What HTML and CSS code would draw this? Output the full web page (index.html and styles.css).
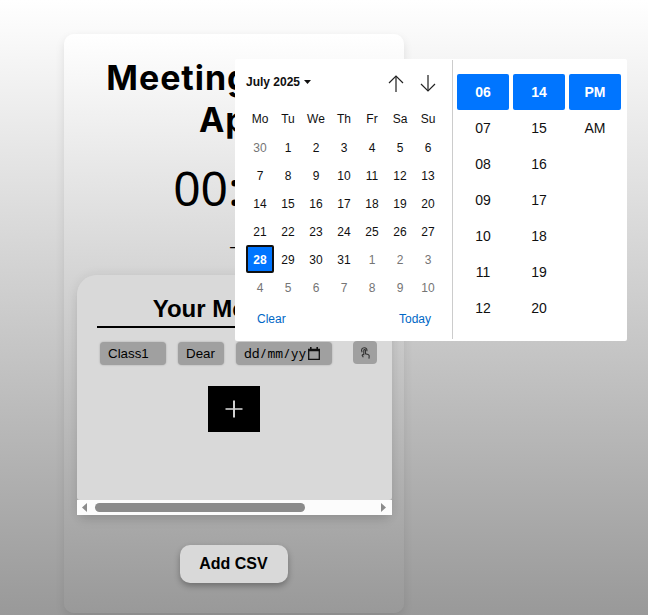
FILE: index.html
```html
<!DOCTYPE html>
<html lang="en">
<head>
<meta charset="utf-8">
<title>Meeting Alarm App</title>
<link rel="stylesheet" href="styles.css">
</head>
<body>
<main class="card">
  <h1 class="title">Meeting Alarm<br>App</h1>
  <div class="timer">00:00</div>
  <div class="status">–</div>
  <section class="panel">
    <div class="panel-body">
      <h2 class="heading">Your Meetings</h2>
      <div class="row">
        <div class="field name">Class1</div>
        <div class="field greet">Dear</div>
        <div class="field date">dd/mm/yy
          <svg width="12" height="13" viewBox="0 0 12 13"><path d="M.7 2.500h10.600v9.800H.7z" fill="none" stroke="#111" stroke-width="1.3"/><path d="M0 2h12v2.200H0zM2 0h1.600v2H2zM8.400 0H10v2H8.400z" fill="#111"/></svg>
        </div>
        <button class="tap" aria-label="Select">
          <svg width="11" height="12" viewBox="0 0 12 14" fill="none" stroke="#333" stroke-width="1.3"><path d="M2 6C.5 3 2 .8 4.500 .8S8.300 3 7.500 5"/><path d="M4 9.500V4c0-1.400 2-1.400 2 0v4l3 .8c1.200.4 1.500 1 1.300 2L10 13.500M4 8.500l-1.500.6c-.6.4-.3 1 0 1.400L3.500 12"/></svg>
        </button>
      </div>
      <button class="add" aria-label="Add meeting">
        <svg width="18" height="18" viewBox="0 0 18 18"><path d="M0.500 9h17" stroke="#fff" stroke-width="1.3"/><path d="M9 .5v17" stroke="#d0d0d0" stroke-width="2"/></svg>
      </button>
    </div>
    <div class="scrollbar">
      <svg width="5" height="9" viewBox="0 0 5 9"><path d="M5 0v9L0 4.500z" fill="#8b8b8b"/></svg>
      <div class="track"><div class="thumb"></div></div>
      <svg width="5" height="9" viewBox="0 0 5 9"><path d="M0 0v9l5-4.500z" fill="#8b8b8b"/></svg>
    </div>
  </section>
  <button class="csv">Add CSV</button>
</main>

<div class="picker">
  <div class="calendar">
    <div class="cal-head">
      <span class="month">July 2025</span>
      <svg class="caret" width="7" height="4" viewBox="0 0 7 4"><path d="M0 0h7L3.500 4z" fill="#101010"/></svg>
      <svg class="arrow" width="16" height="17" viewBox="0 0 16 17" fill="none"><path d="M8 1v16" stroke="#777" stroke-width="2"/><path d="M1 8l7-7 7 7" stroke="#222" stroke-width="1.2"/></svg>
      <svg class="arrow" width="16" height="17" viewBox="0 0 16 17" fill="none"><path d="M8 0v16" stroke="#777" stroke-width="2"/><path d="M1 9l7 7 7-7" stroke="#222" stroke-width="1.2"/></svg>
    </div>
    <div class="grid">
      <span class="wd">Mo</span><span class="wd">Tu</span><span class="wd">We</span><span class="wd">Th</span><span class="wd">Fr</span><span class="wd">Sa</span><span class="wd">Su</span>
      <span class="out">30</span><span>1</span><span>2</span><span>3</span><span>4</span><span>5</span><span>6</span>
      <span>7</span><span>8</span><span>9</span><span>10</span><span>11</span><span>12</span><span>13</span>
      <span>14</span><span>15</span><span>16</span><span>17</span><span>18</span><span>19</span><span>20</span>
      <span>21</span><span>22</span><span>23</span><span>24</span><span>25</span><span>26</span><span>27</span>
      <span class="sel">28</span><span>29</span><span>30</span><span>31</span><span class="out">1</span><span class="out">2</span><span class="out">3</span>
      <span class="out">4</span><span class="out">5</span><span class="out">6</span><span class="out">7</span><span class="out">8</span><span class="out">9</span><span class="out">10</span>
    </div>
    <div class="cal-foot"><span>Clear</span><span>Today</span></div>
  </div>
  <div class="time">
    <div class="col"><b>06</b><span>07</span><span>08</span><span>09</span><span>10</span><span>11</span><span>12</span></div>
    <div class="col"><b>14</b><span>15</span><span>16</span><span>17</span><span>18</span><span>19</span><span>20</span></div>
    <div class="col"><b>PM</b><span>AM</span></div>
  </div>
</div>
</body>
</html>
```
FILE: styles.css
```css
* { box-sizing: border-box; }
html { height: 100%; }
body {
  margin: 0;
  height: 615px;
  overflow: hidden;
  padding: 34px 0 0 64px;
  font-family: "Liberation Sans", Arial, sans-serif;
  color: #000;
  background: linear-gradient(#fff, #999);
}
button { border: 0; padding: 0; font: inherit; color: inherit; }
svg { display: block; flex: none; }

.card {
  width: 340px;
  height: 579px;
  padding: 23px 12px 0 13px;
  border-radius: 10px;
  background: linear-gradient(#fff, #999);
  box-shadow: 0 4px 10px rgba(0, 0, 0, .1);
  display: flex;
  flex-direction: column;
  align-items: center;
}
.title {
  margin: 0;
  font: 700 34px/42px Inter, sans-serif;
  letter-spacing: .95px;
  text-align: center;
  white-space: nowrap;
}
.timer {
  margin-top: 14px;
  font: 48px/66px "Noto Sans", sans-serif;
}
.status { height: 18px; margin-top: 17px; font-size: 16px; line-height: 18px; }

.panel {
  width: 315px;
  height: 240px;
  margin-top: 19px;
  border-radius: 20px 20px 0 0;
  box-shadow: 0 8px 12px -4px rgba(0, 0, 0, .12), 0 0 12px rgba(0, 0, 0, .08);
}
.panel-body {
  height: 225px;
  padding: 19px 15px 0 20px;
  border-radius: 20px 20px 3px 3px;
  background: #d9d9d9;
}
.heading {
  margin: 0;
  width: 275px;
  height: 34px;
  border-bottom: 2px solid #000;
  font-size: 24px;
  line-height: 29px;
  text-align: center;
}
.row { display: flex; align-items: flex-start; margin-top: 14px; padding-left: 3px; height: 24px; }
.field {
  height: 23px;
  border-radius: 4px;
  background: #a0a0a0;
  box-shadow: 0 0 2px rgba(0, 0, 0, .25);
  font-size: 13.333px;
  line-height: 23px;
  padding-left: 8px;
}
.name { width: 66px; }
.greet { width: 46px; margin-left: 12px; }
.date {
  width: 96px;
  margin-left: 12px;
  display: flex;
  align-items: center;
  gap: 2px;
  font-family: "Noto Sans Mono", "DejaVu Sans Mono", monospace;
  font-size: 13px;
  white-space: nowrap;
}
.tap {
  width: 24px;
  height: 23px;
  margin: -1px 0 0 21px;
  border-radius: 4px;
  background: #a0a0a0;
  display: grid;
  place-items: center;
}
.add {
  width: 52px;
  height: 46px;
  margin: 20px 0 0 111px;
  background: #000;
  display: grid;
  place-items: center;
}
.scrollbar {
  height: 15px;
  padding: 0 6px 0 5px;
  background: #fcfcfc;
  display: flex;
  align-items: center;
}
.track { flex: 1; padding-left: 8px; }
.thumb { width: 210px; height: 9px; border-radius: 5px; background: #8b8b8b; }
.csv {
  width: 108px;
  height: 38px;
  margin: 30px 2px 0 0;
  border-radius: 10px;
  background: #d9d9d9;
  box-shadow: 0 3px 6px rgba(0, 0, 0, .3);
  font-size: 16px;
  font-weight: 700;
}

.picker {
  position: absolute;
  left: 235px;
  top: 59px;
  width: 392px;
  height: 282px;
  padding: 1px 0 2px;
  border-radius: 2px;
  background: #fff;
  display: flex;
  color: #101010;
}
.calendar { width: 218px; border-right: 1px solid #ccc; padding-left: 11px; font-size: 12px; }
.cal-head { height: 44px; display: flex; align-items: center; }
.month { width: 54px; font-weight: 700; white-space: nowrap; }
.caret { margin-left: 4px; }
.arrow { margin: 2px 16px 0 0; }
.caret + .arrow { margin-left: 77px; }
.grid { display: grid; grid-template-columns: repeat(7, 28px); grid-template-rows: 29px repeat(6, 28px); }
.grid span { display: grid; place-items: center; padding-top: 2px; }
.grid .wd { padding-top: 0; }
.grid .out { color: #757575; }
.grid .sel { background: #0075ff; color: #fff; font-weight: 700; border: 2px solid #101010; border-radius: 2px; }
.cal-foot { display: flex; justify-content: space-between; padding: 11px 21px 0 11px; color: #0067c6; line-height: 14px; }
.time { display: flex; gap: 4px; padding: 14px 0 0 4px; font-size: 14px; }
.col { width: 52px; }
.col b, .col span { height: 36px; display: grid; place-items: center; }
.col b { background: #0075ff; color: #fff; border-radius: 2px; }
```
